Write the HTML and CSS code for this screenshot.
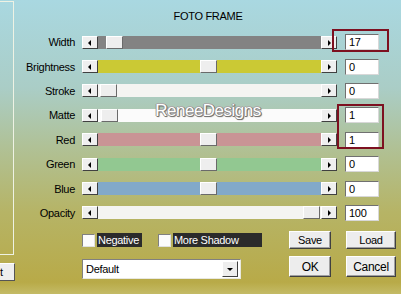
FILE: index.html
```html
<!DOCTYPE html>
<html lang="en">
<head>
    <meta charset="UTF-8">
    <title>Foto Frame</title>
    <link rel="stylesheet" href="styles.css">
</head>
<body>
    <div class="screen">
        <div class="side">
            <div class="side-panel"></div>
            <div class="side-btn"><span>t</span></div>
        </div>

        <div class="dialog">
            <h1 class="title">FOTO FRAME</h1>

            <div class="rows">
                <div class="label">Width</div>
                <div class="slider">
                    <span class="arrow left"></span>
                    <span class="track t-width"><span class="thumb" style="left: 8px"></span></span>
                    <span class="arrow right"></span>
                </div>
                <div class="value">17</div>

                <div class="label">Brightness</div>
                <div class="slider">
                    <span class="arrow left"></span>
                    <span class="track t-bright"><span class="thumb" style="left: 102px"></span></span>
                    <span class="arrow right"></span>
                </div>
                <div class="value">0</div>

                <div class="label">Stroke</div>
                <div class="slider">
                    <span class="arrow left"></span>
                    <span class="track t-light"><span class="thumb" style="left: 2px"></span></span>
                    <span class="arrow right"></span>
                </div>
                <div class="value">0</div>

                <div class="label">Matte</div>
                <div class="slider">
                    <span class="arrow left"></span>
                    <span class="track t-white"><span class="thumb" style="left: 3px"></span></span>
                    <span class="arrow right"></span>
                </div>
                <div class="value">1</div>

                <div class="label">Red</div>
                <div class="slider">
                    <span class="arrow left"></span>
                    <span class="track t-red"><span class="thumb" style="left: 102px"></span></span>
                    <span class="arrow right"></span>
                </div>
                <div class="value">1</div>

                <div class="label">Green</div>
                <div class="slider">
                    <span class="arrow left"></span>
                    <span class="track t-green"><span class="thumb" style="left: 102px"></span></span>
                    <span class="arrow right"></span>
                </div>
                <div class="value">0</div>

                <div class="label">Blue</div>
                <div class="slider">
                    <span class="arrow left"></span>
                    <span class="track t-blue"><span class="thumb" style="left: 102px"></span></span>
                    <span class="arrow right"></span>
                </div>
                <div class="value">0</div>

                <div class="label">Opacity</div>
                <div class="slider">
                    <span class="arrow left"></span>
                    <span class="track t-light"><span class="thumb" style="left: 205px"></span></span>
                    <span class="arrow right"></span>
                </div>
                <div class="value">100</div>
            </div>

            <div class="bottom">
                <div class="checks">
                    <span class="box"></span>
                    <span class="check-label neg">Negative</span>
                    <span class="box second"></span>
                    <span class="check-label shadow">More Shadow</span>
                </div>
                <div class="btn">Save</div>
                <div class="btn">Load</div>

                <div class="select">
                    <span class="select-text">Default</span>
                    <span class="select-btn"></span>
                </div>
                <div class="btn big">OK</div>
                <div class="btn big">Cancel</div>
            </div>

            <div class="mark">ReneeDesigns</div>
            <div class="hl hl-width"></div>
            <div class="hl hl-matte"></div>
        </div>
    </div>
</body>
</html>
```

FILE: styles.css
```css
body {
    margin: 0;
    font-family: "Liberation Sans", Arial, sans-serif;
    font-size: 11px;
    letter-spacing: -0.3px;
    color: #000;
}

.screen {
    display: flex;
    width: 401px;
    height: 294px;
    overflow: hidden;
    background: linear-gradient(#a9d8e1 0%, #aacdc6 30%, #b0c196 50%, #b6b466 72%, #b8aa48 96%, #c4bb66 100%);
}

/* cut-off panel on the left */
.side {
    width: 15px;
    flex-shrink: 0;
}

.side-panel {
    margin-top: 1px;
    width: 13px;
    height: 252px;
    border: 1px solid #eef2e4;
    border-left: none;
}

.side-btn {
    margin-top: 8px;
    width: 14px;
    height: 16px;
    display: flex;
    align-items: center;
    background: #eeeeee;
    border-right: 1px solid #555;
    border-bottom: 1px solid #555;
    border-top: 1px solid #fff;
}

.dialog {
    position: relative;
    flex: 1;
}

.title {
    margin: 0;
    padding-top: 10px;
    height: 20px;
    line-height: 13px;
    font-size: 11px;
    font-weight: normal;
    text-align: center;
}

.rows {
    display: grid;
    grid-template-columns: 61px 255px 36px;
    grid-auto-rows: 24.4px;
    column-gap: 6px;
    align-items: center;
}

.label {
    text-align: right;
    padding-right: 1px;
}

.slider {
    display: flex;
    height: 13px;
}

.arrow {
    position: relative;
    width: 14px;
    height: 11px;
    background: #efefef;
    border: 1px solid;
    border-color: #fff #404040 #404040 #fff;
}

.arrow::after {
    content: "";
    position: absolute;
    top: 3px;
    width: 0;
    height: 0;
    border-top: 3px solid transparent;
    border-bottom: 3px solid transparent;
}

.arrow.left::after {
    left: 5px;
    border-right: 3px solid #000;
}

.arrow.right::after {
    left: 6px;
    border-left: 3px solid #000;
}

.track {
    position: relative;
    flex: 1;
}

.t-width { background: #838383; }
.t-bright { background: #cbc934; }
.t-light { background: #f4f4f2; }
.t-white { background: #fbfbfb; }
.t-red { background: #c99495; }
.t-green { background: #92c891; }
.t-blue { background: #82a9c9; }

.thumb {
    position: absolute;
    top: 0;
    width: 15px;
    height: 11px;
    background: #eeeeee;
    border: 1px solid;
    border-color: #fff #6a6a6a #6a6a6a #fff;
}

.value {
    margin-left: 2px;
    height: 14px;
    line-height: 14px;
    padding-left: 3px;
    background: #fff;
    border: 1px solid;
    border-color: #707070 #d8d8d8 #d8d8d8 #707070;
}

.bottom {
    display: grid;
    grid-template-columns: 192px 42px 50px;
    grid-template-rows: 18px 22px;
    column-gap: 15px;
    row-gap: 7px;
    margin-top: 6px;
    padding-left: 67px;
}

.checks {
    display: flex;
    align-items: center;
}

.box {
    width: 11px;
    height: 11px;
    background: #fbfbfb;
    border: 1px solid;
    border-color: #808080 #e0e0e0 #e0e0e0 #808080;
}

.box.second {
    margin-left: 16px;
}

.check-label {
    margin-left: 2px;
    height: 14px;
    line-height: 14px;
    padding-left: 1px;
    background: #2b2b2b;
    color: #fff;
}

.neg { width: 44px; }
.shadow { width: 88px; }

.btn {
    display: flex;
    align-items: center;
    justify-content: center;
    background: #ededed;
    border: 1px solid;
    border-color: #fff #404040 #404040 #fff;
    box-shadow: inset -1px -1px 0 #a0a0a0;
}

.btn.big {
    height: 19px;
    font-size: 12px;
}

.select {
    margin-top: 3px;
    width: 157px;
    height: 18px;
    display: flex;
    align-items: center;
    background: #fff;
    border: 1px solid;
    border-color: #808080 #e8e8e0 #e8e8e0 #808080;
}

.select-text {
    flex: 1;
    padding-left: 3px;
}

.select-btn {
    position: relative;
    width: 14px;
    height: 14px;
    margin-right: 2px;
    background: #eeeeee;
    border: 1px solid;
    border-color: #fff #404040 #404040 #fff;
}

.select-btn::after {
    content: "";
    position: absolute;
    left: 4px;
    top: 6px;
    border-left: 3px solid transparent;
    border-right: 3px solid transparent;
    border-top: 3px solid #000;
}

/* watermark and annotation boxes drawn over the dialog */
.mark {
    position: absolute;
    left: 0;
    right: 0;
    top: 101px;
    text-align: center;
    font-size: 17px;
    letter-spacing: -0.5px;
    color: #fff;
    text-shadow: 1px 0 0 #777, -1px 0 0 #999, 0 1px 0 #777, 0 -1px 0 #aaa, 1px 1px 1px #555;
}

.hl {
    position: absolute;
    border: 2px solid #7d1020;
}

.hl-width {
    left: 317px;
    top: 29px;
    width: 53px;
    height: 19px;
}

.hl-matte {
    left: 322px;
    top: 104px;
    width: 43px;
    height: 41px;
}
```
